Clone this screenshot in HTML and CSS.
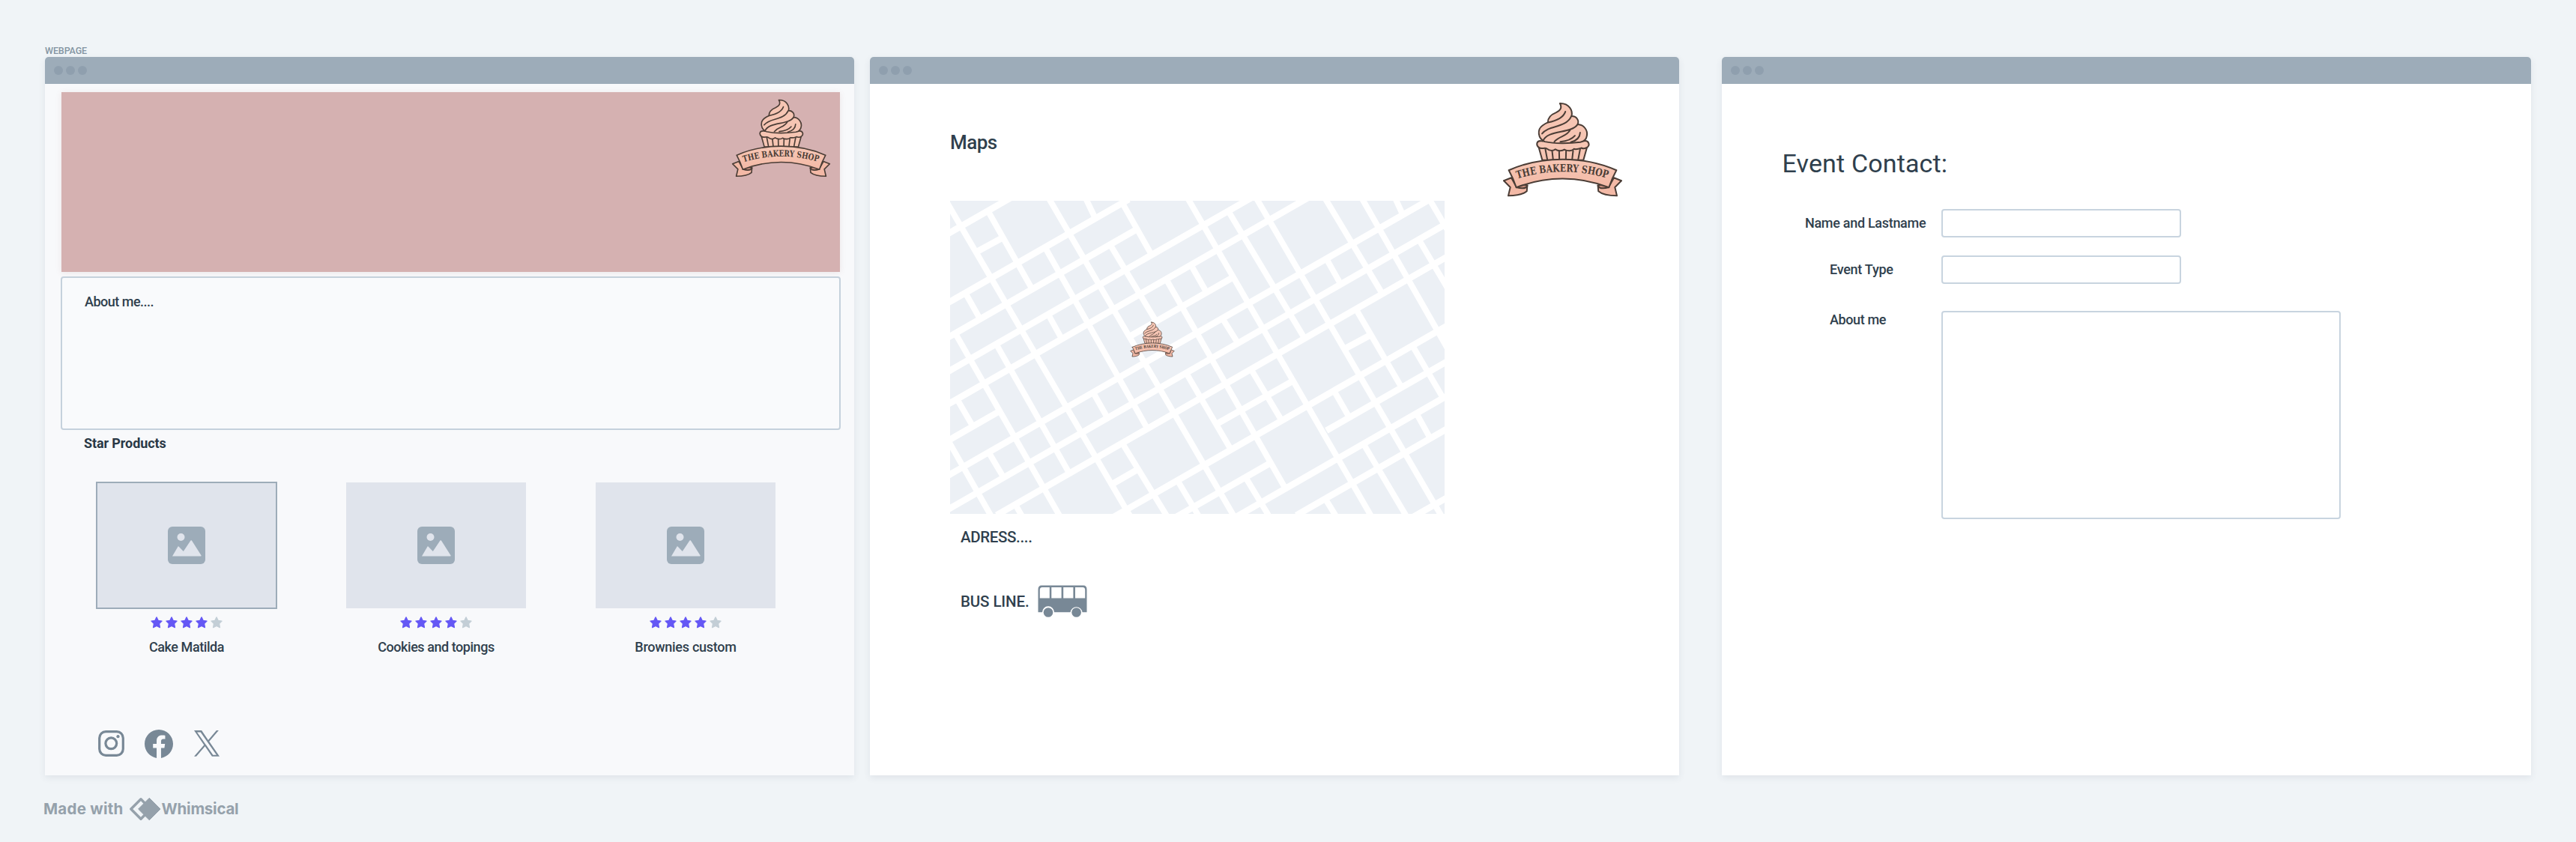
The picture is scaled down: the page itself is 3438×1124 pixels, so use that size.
FILE: index.html
```html
<!DOCTYPE html>
<html lang="en">
<head>
<meta charset="utf-8">
<title>The Bakery Shop wireframes</title>
<link rel="stylesheet" href="styles.css">
</head>
<body>
<svg class="defs" aria-hidden="true">
  <defs>
    <linearGradient id="ribbon" x1="0" y1="0" x2="0" y2="1">
      <stop offset="0" stop-color="#f7c7b5"/><stop offset="1" stop-color="#f3b9a6"/>
    </linearGradient>
    <path id="arc" d="M104 356 Q285 300 470 356"/>
    <symbol id="logo" viewBox="44 46 482 386">
      <g stroke="#4b3d36" stroke-width="6" stroke-linejoin="round" stroke-linecap="round">
        <path fill="#f6c5b3" d="M190 232 L204 282 H368 L382 232 Z"/>
        <path fill="none" d="M216 238 L224 280 M243 244 L247 280 M271 242 L272 280 M299 242 L298 280 M327 244 L323 280 M355 238 L347 280"/>
        <path fill="#f6c5b3" d="M198 205 C180 204 178 222 190 231 C200 240 214 230 222 236 C232 244 246 246 256 238 C266 246 284 246 292 239 C304 246 322 246 330 237 C342 240 352 236 360 233 C376 240 394 228 389 214 C386 206 380 204 372 205 Z"/>
        <path fill="#f6c5b3" d="M274 55 C312 54 326 84 321 106 C342 106 352 124 345 139 C372 140 386 164 382 184 C380 198 372 207 356 210 C310 216 250 216 214 208 C186 196 182 160 204 144 C212 138 219 134 226 131 C226 110 238 100 258 92 C276 84 284 72 274 55 Z"/>
        <path fill="none" d="M226 131 C262 124 288 112 296 88 M203 176 C230 140 296 156 320 106 M206 206 C226 158 318 178 345 139 M252 208 C274 182 300 190 316 160 M318 210 C340 204 354 192 355 172 M276 208 C300 206 322 198 334 184"/>
        <path fill="#f3b9a6" d="M80 352 L50 364 L76 390 L68 424 C98 424 128 418 142 406 L144 382 L100 388 Z"/>
        <path fill="#f3b9a6" d="M490 352 L520 364 L494 390 L502 424 C472 424 442 418 428 406 L426 382 L470 388 Z"/>
        <path fill="#c98f7e" d="M100 390 C118 374 134 380 144 384 C138 396 120 396 100 390 Z M470 390 C452 374 436 380 426 384 C432 396 450 396 470 390 Z"/>
        <path fill="url(#ribbon)" d="M70 322 C200 264 370 264 500 322 C488 344 478 366 470 391 C350 344 220 344 100 391 C92 366 82 344 70 322 Z"/>
      </g>
      <text class="logo-text"><textPath href="#arc" textLength="366" lengthAdjust="spacingAndGlyphs">THE BAKERY SHOP</textPath></text>
    </symbol>
    <symbol id="picture" viewBox="0 0 50 50">
      <rect width="50" height="50" rx="6" fill="#9dacb9"/>
      <circle cx="17.5" cy="14" r="5" fill="#e0e4ec"/>
      <path d="M6 39.5 L13.6 26.4 Q14 26 14.5 26.5 L20.8 33 L30.5 18.6 Q31.2 17.8 31.9 18.6 L44.6 38.5 Q44.8 39.5 44 39.5 Z" fill="#e0e4ec"/>
    </symbol>
    <symbol id="star" viewBox="0 0 16 16">
      <path d="M8 1 L10.1 5.4 L15 6.1 L11.5 9.6 L12.4 14.6 L8 12.4 L3.6 14.6 L4.5 9.6 L1 6.1 L5.9 5.4 Z" stroke="currentColor" stroke-width="1.4" stroke-linejoin="round" fill="currentColor"/>
    </symbol>
  </defs>
</svg>

<p class="board-label"><span>WEBPAGE</span></p>
<main class="board">
  <section class="page page-home">
    <header class="bar"><i></i><i></i><i></i></header>
    <div class="home">
      <div class="banner"><svg class="banner-logo"><use href="#logo"/></svg></div>
      <div class="about"><span class="t-about">About me....</span></div>
      <h2 class="star-title"><span>Star Products</span></h2>
      <div class="products">
        <article class="product">
          <div class="thumb selected"><svg><use href="#picture"/></svg></div>
          <div class="stars"><svg><use href="#star"/></svg><svg><use href="#star"/></svg><svg><use href="#star"/></svg><svg><use href="#star"/></svg><svg class="off"><use href="#star"/></svg></div>
          <p><span class="t-cake">Cake Matilda</span></p>
        </article>
        <article class="product">
          <div class="thumb"><svg><use href="#picture"/></svg></div>
          <div class="stars"><svg><use href="#star"/></svg><svg><use href="#star"/></svg><svg><use href="#star"/></svg><svg><use href="#star"/></svg><svg class="off"><use href="#star"/></svg></div>
          <p><span class="t-cookies">Cookies and topings</span></p>
        </article>
        <article class="product">
          <div class="thumb"><svg><use href="#picture"/></svg></div>
          <div class="stars"><svg><use href="#star"/></svg><svg><use href="#star"/></svg><svg><use href="#star"/></svg><svg><use href="#star"/></svg><svg class="off"><use href="#star"/></svg></div>
          <p><span class="t-brownies">Brownies custom</span></p>
        </article>
      </div>
      <div class="social">
        <svg width="35" height="35" viewBox="0 0 35 35" fill="none" stroke="#788896" stroke-width="3.2"><rect x="1.7" y="1.7" width="31.6" height="31.6" rx="8.5"/><circle cx="17.3" cy="17.3" r="7.4"/><circle cx="26.5" cy="8.2" r="2.1" fill="#788896" stroke="none"/></svg>
        <svg width="38" height="38" viewBox="0 0 24 24" fill="#788896"><path d="M24 12.073c0-6.627-5.373-12-12-12s-12 5.373-12 12c0 5.99 4.388 10.954 10.125 11.854v-8.385H7.078v-3.47h3.047V9.43c0-3.007 1.792-4.669 4.533-4.669 1.312 0 2.686.235 2.686.235v2.953H15.83c-1.491 0-1.956.925-1.956 1.874v2.25h3.328l-.532 3.47h-2.796v8.385C19.612 23.027 24 18.062 24 12.073z"/></svg>
        <svg width="34" height="35" viewBox="0 0 1200 1227" fill="#788896"><path d="M714.163 519.284L1160.89 0H1055.03L667.137 450.887L357.328 0H0L468.492 681.821L0 1226.37H105.866L515.491 750.218L842.672 1226.37H1200L714.137 519.284H714.163ZM569.165 687.828L521.697 619.934L144.011 79.6944H306.615L611.412 515.685L658.88 583.579L1055.08 1150.3H892.476L569.165 687.854V687.828Z"/></svg>
      </div>
    </div>
  </section>

  <section class="page page-maps">
    <header class="bar"><i></i><i></i><i></i></header>
    <div class="maps">
      <div class="maps-head">
        <h1><span>Maps</span></h1>
        <svg class="maps-logo"><use href="#logo"/></svg>
      </div>
      <div class="map">
        <svg class="streets" viewBox="41 52 1477 1256" preserveAspectRatio="none">
          <path class="avenue" d="M30 188L230 34M30 465L575 46M30 604L597 168M30 741L950 33M30 872L1110 40M30 1018L185 899M582 593L885 360M30 1158L1490 34M30 1294L1530 139M180 1313L1530 273M530 1185L600 1131M840 945L1065 775M1225 642L1300 588M530 1320L1530 550M705 1329L1000 1102M1165 974L1530 693M885 1328L1530 831M1075 1314L1530 963M1410 1331L1530 1239M120 257L195 202"/>
          <path class="street" d="M30 55L580 1320M155 95L285 404M335 40L890 1320M446 42L472 115M555 60L640 262M325 240L630 965M520 230L656 535M750 40L1300 1320M875 100L1100 604M955 40L1510 1320M1160 40L1332 425M1270 40L1530 652M1370 40L1392 105M1470 40L1530 177M90 430L130 525M55 580L370 1320M180 630L395 1140M335 510L377 612M65 855L107 952M38 1020L165 1320M158 1065L200 1160M470 825L512 925M690 375L1042 1205M765 320L805 415M855 525L900 622M745 740L880 1050M943 735L1032 935M558 1030L690 1320M723 1180L785 1320M925 1165L995 1320M1165 285L1207 385M1257 495L1387 795M1190 820L1232 918M1425 640L1512 840M1440 205L1530 410M1434 905L1475 1005M1277 1030L1405 1320M1165 1255L1195 1320M240 1280L255 1315M1493 1280L1510 1320M1508 568L1530 617"/>
        </svg>
        <svg class="pin"><use href="#logo"/></svg>
      </div>
      <p class="line"><span class="t-adress">ADRESS....</span></p>
      <p class="line bus"><span class="t-bus">BUS LINE.</span>
        <svg width="66" height="44" viewBox="0 0 66 44" fill="#788896">
          <path fill-rule="evenodd" d="M5 .5H61Q65.5 .5 65.5 6V36.3H59.5A8 8 0 0 0 43.6 36.3H22A8 8 0 0 0 6 36.3H.5V6Q.5 .5 5 .5ZM6 3Q2.8 3 2.8 6.5V17.5H15.8V3ZM18.3 3V17.5H31.6V3ZM34.2 3V17.5H47.4V3ZM50 3V17.5H63.2V6.5Q63.2 3 60 3Z"/>
          <circle cx="14" cy="36.5" r="6.3"/><circle cx="51.6" cy="36.5" r="6.3"/>
        </svg>
      </p>
    </div>
  </section>

  <section class="page page-contact">
    <header class="bar"><i></i><i></i><i></i></header>
    <form class="contact">
      <h1><span>Event Contact:</span></h1>
      <div class="field"><label class="wide"><span class="t-name">Name and Lastname</span></label><div class="input"></div></div>
      <div class="field"><label><span class="t-type">Event Type</span></label><div class="input"></div></div>
      <div class="field area"><label><span class="t-me">About me</span></label><div class="input textarea"></div></div>
    </form>
  </section>
</main>

<footer class="credit">
  <span class="t-made">Made with</span>
  <svg width="42" height="30" viewBox="0 0 42 30"><path d="M15 1.8L28 15L15 28.2L1.8 15Z" fill="none" stroke="#95a1ab" stroke-width="3.4" stroke-linejoin="round"/><path d="M26.3 .3L41 15L26.3 29.7L11.6 15Z" fill="#95a1ab" stroke="#95a1ab" stroke-linejoin="round"/></svg>
  <span class="t-whim">Whimsical</span>
</footer>
</body>
</html>
```
FILE: styles.css
```css
* { box-sizing: border-box; margin: 0; padding: 0; }
body {
  width: 3438px; height: 1124px; overflow: hidden;
  background: #f0f4f7; color: #2f3f4d;
  font: 500 18px/24px Roboto, "Liberation Sans", sans-serif;
}
.defs { position: absolute; width: 0; height: 0; }
span { white-space: nowrap; }
.board-label { margin: 60px 0 0 60px; height: 16px; font-size: 12.5px; line-height: 16px; letter-spacing: -.1px; color: #8494a2; }
.board { display: flex; padding-left: 60px; height: 959px; }
.page { width: 1080px; display: flex; flex-direction: column; background: #fff; border-radius: 5px 5px 0 0; box-shadow: 0 3px 10px rgba(50, 70, 90, .09); }
.page-home { background: #f8f9fb; }
.page-maps { margin-left: 21px; }
.page-contact { margin-left: 57px; }
.bar { display: flex; align-items: center; gap: 4px; height: 36px; padding-left: 12px; background: #9dacb9; border-radius: 5px 5px 0 0; }
.bar i { width: 12px; height: 12px; border-radius: 50%; background: #8f9fae; }

.home { padding: 11px 19px 0 22px; }
.banner { height: 240px; padding: 8px 12.5px; background: #d5b1b1; box-shadow: 0 1px 8px rgba(160, 90, 90, .12); display: flex; justify-content: flex-end; }
.banner-logo { width: 133px; height: 106.5px; }
.about { margin: 6px -1px 0; height: 205px; padding: 20px 30px; border: 2px solid #c5d1dc; border-radius: 4px; background: #f9fafc; }
.star-title { margin: 6px 0 0 30px; font-size: 18px; line-height: 24px; font-weight: 700; letter-spacing: -.1px; color: #293845; }
.products { display: flex; gap: 93px; margin: 40px 0 0 47px; }
.product { width: 240px; }
.thumb { height: 168px; display: grid; place-items: center; background: #e0e4ec; }
.thumb svg { width: 50px; height: 50px; }
.selected { outline: 2px solid #9dacb9; outline-offset: -1px; }
.stars { display: flex; justify-content: center; gap: 4px; margin-top: 11px; height: 17px; color: #6558f5; }
.stars svg { width: 16px; height: 16px; }
.stars .off { color: #c3ced6; }
.product p { margin-top: 12px; text-align: center; }
.social { display: flex; align-items: center; margin: 97.5px 0 0 48.5px; }
.social svg + svg { margin-left: 27.5px; }

.t-about { letter-spacing: -.5px; }
.t-cake { letter-spacing: -.42px; }
.t-cookies { letter-spacing: -.45px; }
.t-brownies { letter-spacing: -.27px; }
.t-adress { letter-spacing: -.36px; }
.t-bus { letter-spacing: -.12px; }
.t-name { letter-spacing: -.3px; }
.t-type { letter-spacing: -.27px; }
.t-me { letter-spacing: -.38px; }

.maps { padding: 0 75.3px 0 107px; }
.maps-head { display: flex; justify-content: space-between; height: 156px; padding-top: 23px; }
.maps h1 { margin-top: 37.5px; font-size: 26px; line-height: 34px; font-weight: 500; letter-spacing: -.5px; }
.maps-logo { width: 161px; height: 129px; }
.map { position: relative; width: 660px; height: 418px; background: #ecf0f5; overflow: hidden; }
.streets { display: block; width: 100%; height: 100%; fill: none; stroke: #fff; }
.streets path { vector-effect: non-scaling-stroke; }
.avenue { stroke-width: 8.6px; }
.street { stroke-width: 7.9px; }
.pin { position: absolute; left: 240px; top: 161px; width: 60px; height: 48px; }
.line { display: flex; align-items: center; height: 44px; margin: 9px 0 0 14px; font-size: 20.5px; }
.bus { margin-top: 42px; gap: 11.8px; }
.line svg { flex: none; }

.contact { padding: 83.5px 0 0 82px; }
.contact h1 { margin-left: -1.5px; font-size: 34px; line-height: 44px; font-weight: 400; letter-spacing: .15px; }
.field { display: flex; align-items: center; height: 38px; margin-bottom: 24px; }
.contact h1 + .field { margin-top: 39.5px; }
.field label { width: 211px; padding-left: 62px; }
.field label.wide { padding-left: 29px; }
.input { width: 320px; height: 38px; border: 2px solid #c8d4df; border-radius: 4px; background: #fff; }
.area { align-items: flex-start; height: 278px; margin-top: 36px; }
.textarea { width: 533px; height: 278px; }

.credit { display: flex; align-items: center; height: 30px; margin: 30px 0 0 58px; color: #95a1ab; font: 700 20.5px/30px Inter, sans-serif; }
.credit svg { margin: 0 1px 0 8px; }
.t-made { letter-spacing: .25px; }
.t-whim { letter-spacing: -.25px; }
.logo-text { font: 700 42px "DejaVu Serif Condensed", "DejaVu Serif", "Liberation Serif", serif; fill: #4b3d36; }
```
